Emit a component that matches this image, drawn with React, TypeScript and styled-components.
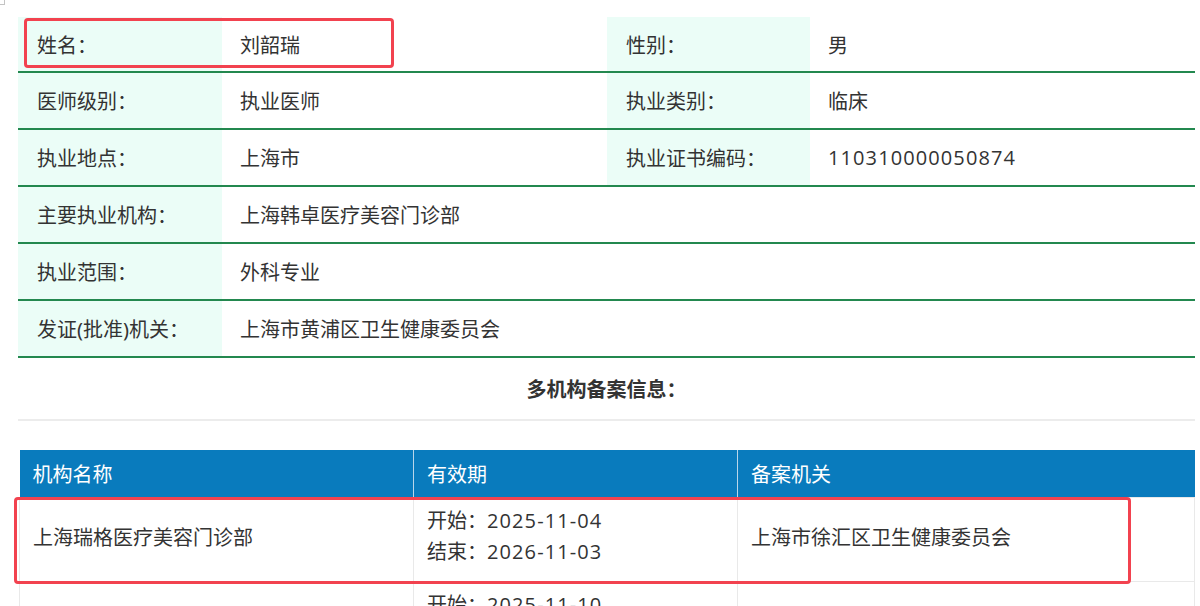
import { FC } from "react";
import styled, { createGlobalStyle } from "styled-components";

const GlobalStyle = createGlobalStyle`
  body {
    margin: 0;
    background: #fff;
    font-family: "Noto Sans", "Noto Sans CJK SC", sans-serif;
    color: #333;
  }
  * {
    box-sizing: border-box;
  }
`;

interface InfoRow {
  label: string;
  value: string;
  label2?: string;
  value2?: string;
  numeric?: boolean;
}

const infoRows: InfoRow[] = [
  { label: "姓名：", value: "刘韶瑞", label2: "性别：", value2: "男" },
  { label: "医师级别：", value: "执业医师", label2: "执业类别：", value2: "临床" },
  {
    label: "执业地点：",
    value: "上海市",
    label2: "执业证书编码：",
    value2: "110310000050874",
    numeric: true,
  },
  { label: "主要执业机构：", value: "上海韩卓医疗美容门诊部" },
  { label: "执业范围：", value: "外科专业" },
  { label: "发证(批准)机关：", value: "上海市黄浦区卫生健康委员会" },
];

const records = [
  {
    name: "上海瑞格医疗美容门诊部",
    start: "2025-11-04",
    end: "2026-11-03",
    office: "上海市徐汇区卫生健康委员会",
  },
  {
    name: "上海瑞格医疗美容门诊部",
    start: "2025-11-10",
    end: "2026-11-09",
    office: "上海市徐汇区卫生健康委员会",
  },
];

const App: FC = () => {
  return (
    <Page>
      <GlobalStyle />
      <CornerMark />

      <InfoTable>
        {infoRows.map((row) => (
          <Row key={row.label}>
            <Label>{row.label}</Label>
            <Value $wide={!row.label2}>{row.value}</Value>
            {row.label2 && (
              <>
                <Label>{row.label2}</Label>
                <Value>{row.numeric ? <Num>{row.value2}</Num> : row.value2}</Value>
              </>
            )}
          </Row>
        ))}
      </InfoTable>

      <SectionTitle>多机构备案信息：</SectionTitle>

      <RecordTable>
        <colgroup>
          <col style={{ width: 394 }} />
          <col style={{ width: 324 }} />
          <col />
        </colgroup>
        <thead>
          <tr>
            <Th>机构名称</Th>
            <Th>有效期</Th>
            <Th>备案机关</Th>
          </tr>
        </thead>
        <tbody>
          {records.map((r, i) => (
            <tr key={i}>
              <Td>{r.name}</Td>
              <Td>
                <DateLine>
                  开始：<Num>{r.start}</Num>
                </DateLine>
                <DateLine>
                  结束：<Num>{r.end}</Num>
                </DateLine>
              </Td>
              <Td>{r.office}</Td>
            </tr>
          ))}
        </tbody>
      </RecordTable>

      <Highlight style={{ left: 24, top: 18, width: 370, height: 50 }} />
      <Highlight style={{ left: 14, top: 497, width: 1117, height: 87 }} />
    </Page>
  );
};

const Page = styled.div`
  position: relative;
  width: 1200px;
  height: 606px;
  overflow: hidden;
  padding: 17px 5px 0 18px;
`;

const CornerMark = styled.span`
  position: absolute;
  left: 0;
  top: 0;
  width: 5px;
  height: 5px;
  border-right: 1px solid #c4c4c4;
  border-bottom: 1px solid #c4c4c4;
`;

const InfoTable = styled.div`
  width: 1177px;
`;

const Row = styled.div`
  display: grid;
  grid-template-columns: 204px 385px 203px 385px;
  height: 57px;
  border-bottom: 2px solid #23884f;

  &:first-child {
    height: 56px;
  }
`;

const Label = styled.div`
  display: flex;
  align-items: center;
  padding-left: 19px;
  background-color: #ebfdf7;
  font-size: 20px;
  color: #333;
`;

const Value = styled.div<{ $wide?: boolean }>`
  display: flex;
  align-items: center;
  padding-left: 18px;
  font-size: 20px;
  color: #333;
  grid-column: ${(p) => (p.$wide ? "2 / 5" : "auto")};
`;

const Num = styled.span`
  font-family: "Open Sans", "Noto Sans", sans-serif;
  letter-spacing: 1.1px;
`;

const SectionTitle = styled.div`
  width: 1177px;
  height: 63px;
  display: flex;
  align-items: center;
  justify-content: center;
  border-bottom: 2px solid #ececec;
  font-size: 20px;
  font-weight: bold;
  color: #333;
`;

const RecordTable = styled.table`
  width: 1176px;
  margin-top: 29px;
  margin-left: 1px;
  border-collapse: collapse;
  table-layout: fixed;
`;

const Th = styled.th`
  height: 47px;
  padding: 0 0 0 13px;
  background-color: #097bbd;
  border-left: 1px solid #b9d6ea;
  color: #fff;
  font-size: 20px;
  font-weight: normal;
  text-align: left;

  &:first-child {
    border-left: none;
  }
`;

const Td = styled.td`
  height: 84px;
  padding: 4px 0 10px 13px;
  border: 1px solid #e9e9e9;
  font-size: 20px;
  color: #333;
  vertical-align: middle;
`;

const DateLine = styled.div`
  line-height: 31px;
`;

const Highlight = styled.div`
  position: absolute;
  border: 3px solid #f2424f;
  border-radius: 4px;
  pointer-events: none;
`;

export default App;
